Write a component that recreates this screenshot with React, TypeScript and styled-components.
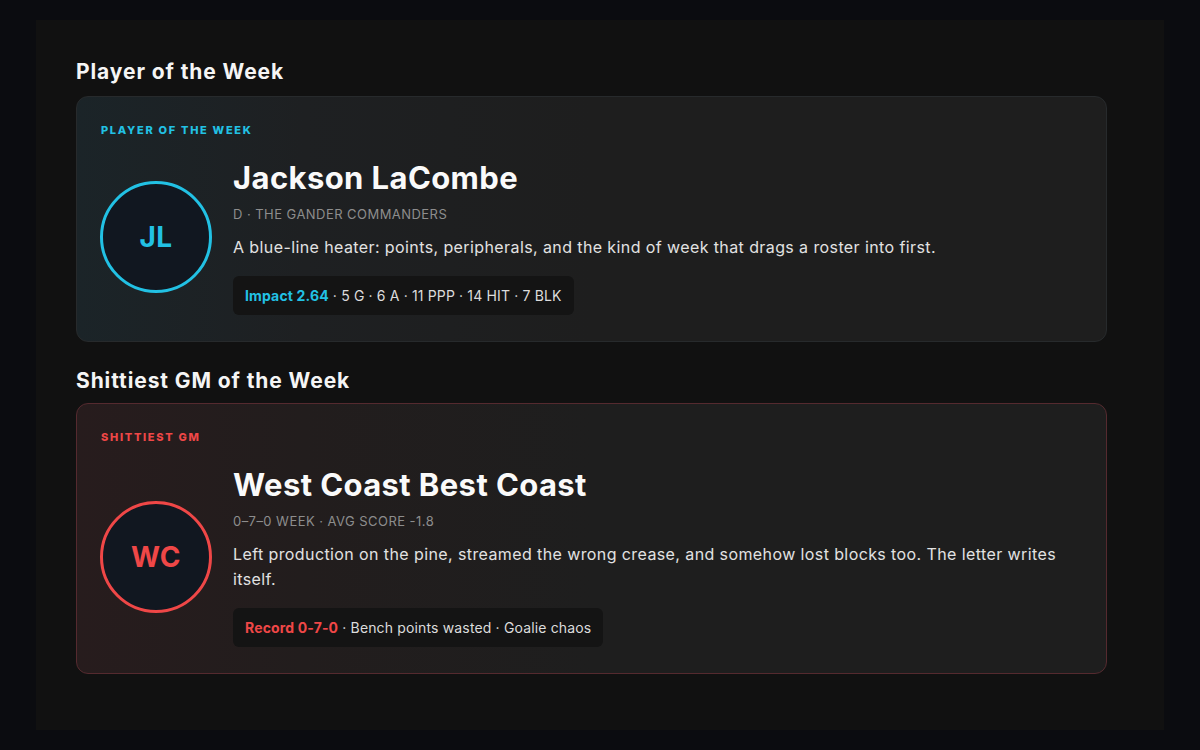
import React from "react";
import styled, { createGlobalStyle } from "styled-components";

const GlobalStyle = createGlobalStyle`
  html, body { margin: 0; padding: 0; background: #0b0c10; }
  body { font-family: Inter, "Noto Sans", sans-serif; color: #e8e8e8; }
  * { box-sizing: border-box; }
`;

const Page = styled.div`
  min-height: 750px;
  padding: 20px 36px;
  background: #0b0c10;
`;

const Panel = styled.main`
  background: #111111;
  height: 710px;
  padding: 38px 57px 0 40px;
  display: flex;
  flex-direction: column;
`;

const SectionTitle = styled.h2<{ $first?: boolean }>`
  margin: ${(p) => (p.$first ? "0 0 10px" : "25px 0 8px")};
  font-size: 21px;
  font-weight: 700;
  line-height: 28px;
  color: #f5f5f5;
  letter-spacing: 0.9px;
`;

type Tone = "blue" | "red";

const accent: Record<Tone, string> = {
  blue: "#22c1e4",
  red: "#ef4747",
};

const Card = styled.section<{ $tone: Tone }>`
  border-radius: 12px;
  border: 1px solid ${(p) => (p.$tone === "blue" ? "#272a2c" : "#552a2f")};
  background: ${(p) =>
    p.$tone === "blue"
      ? "linear-gradient(90deg, #1b2428 0%, #1e2022 22%, #1e1e1e 50%, #1e1e1e 100%)"
      : "linear-gradient(90deg, #271c1d 0%, #221d1d 22%, #1e1e1e 50%, #1e1e1e 100%)"};
  padding: 26px 24px 26px 23px;
`;

const Label = styled.div<{ $tone: Tone }>`
  padding-left: 1px;
  font-size: 11px;
  font-weight: 800;
  letter-spacing: 1.7px;
  text-transform: uppercase;
  color: ${(p) => accent[p.$tone]};
  line-height: 14px;
`;

const Body = styled.div`
  display: flex;
  align-items: center;
  gap: 21px;
  margin-top: 22px;
`;

const Avatar = styled.div<{ $tone: Tone }>`
  flex: 0 0 112px;
  width: 112px;
  height: 112px;
  border-radius: 50%;
  border: 3px solid ${(p) => accent[p.$tone]};
  background: #111720;
  display: flex;
  align-items: center;
  justify-content: center;
  font-size: 28px;
  font-weight: 700;
  color: ${(p) => accent[p.$tone]};
  letter-spacing: 0.5px;
`;

const Info = styled.div`
  display: flex;
  flex-direction: column;
  min-width: 0;
`;

const Name = styled.h3`
  margin: 0;
  font-size: 31px;
  font-weight: 700;
  line-height: 38px;
  color: #fafafa;
  letter-spacing: 0.4px;
`;

const Meta = styled.div`
  margin-top: 8px;
  font-size: 13px;
  line-height: 18px;
  color: #8d8d8d;
  text-transform: uppercase;
  letter-spacing: 0.45px;
`;

const Blurb = styled.p`
  margin: 12px 0 0;
  font-size: 16px;
  line-height: 25px;
  color: #e2e2e2;
  letter-spacing: 0.4px;
`;

const StatPill = styled.div`
  align-self: flex-start;
  margin-top: 16px;
  padding: 10px 12px;
  border-radius: 6px;
  background: #141414;
  font-size: 14px;
  line-height: 19px;
  color: #dcdcdc;
  letter-spacing: 0.15px;
`;

const Highlight = styled.strong<{ $tone: Tone }>`
  font-weight: 700;
  color: ${(p) => accent[p.$tone]};
`;

type Award = {
  tone: Tone;
  heading: string;
  label: string;
  initials: string;
  name: string;
  meta: string;
  blurb: string;
  highlight: string;
  stats: string;
};

const awards: Award[] = [
  {
    tone: "blue",
    heading: "Player of the Week",
    label: "Player of the Week",
    initials: "JL",
    name: "Jackson LaCombe",
    meta: "D · The Gander Commanders",
    blurb:
      "A blue-line heater: points, peripherals, and the kind of week that drags a roster into first.",
    highlight: "Impact 2.64",
    stats: " · 5 G · 6 A · 11 PPP · 14 HIT · 7 BLK",
  },
  {
    tone: "red",
    heading: "Shittiest GM of the Week",
    label: "Shittiest GM",
    initials: "WC",
    name: "West Coast Best Coast",
    meta: "0–7–0 Week · Avg Score -1.8",
    blurb:
      "Left production on the pine, streamed the wrong crease, and somehow lost blocks too. The letter writes itself.",
    highlight: "Record 0-7-0",
    stats: " · Bench points wasted · Goalie chaos",
  },
];

export default function App() {
  return (
    <>
      <GlobalStyle />
      <Page>
        <Panel>
          {awards.map((a, i) => (
            <React.Fragment key={a.name}>
              <SectionTitle $first={i === 0}>{a.heading}</SectionTitle>
              <Card $tone={a.tone}>
                <Label $tone={a.tone}>{a.label}</Label>
                <Body>
                  <Avatar $tone={a.tone}>{a.initials}</Avatar>
                  <Info>
                    <Name>{a.name}</Name>
                    <Meta>{a.meta}</Meta>
                    <Blurb>{a.blurb}</Blurb>
                    <StatPill>
                      <Highlight $tone={a.tone}>{a.highlight}</Highlight>
                      {a.stats}
                    </StatPill>
                  </Info>
                </Body>
              </Card>
            </React.Fragment>
          ))}
        </Panel>
      </Page>
    </>
  );
}
